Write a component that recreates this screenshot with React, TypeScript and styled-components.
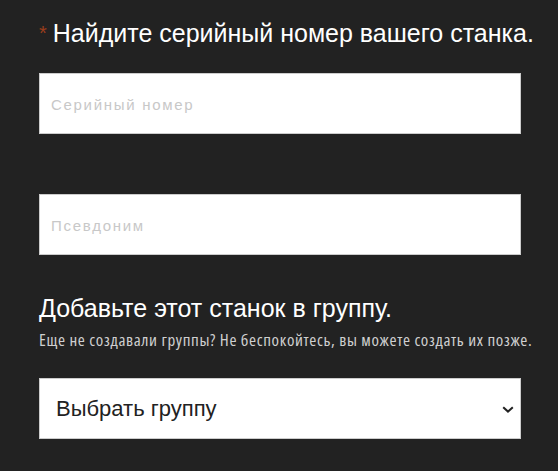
import { createGlobalStyle } from "styled-components";
import styled from "styled-components";

const GlobalStyle = createGlobalStyle`
	html, body {
		margin: 0;
		padding: 0;
		background: #222222;
	}

	body {
		font-family: "Liberation Sans", Arial, sans-serif;
	}

	* {
		box-sizing: border-box;
	}
`;

const App = () => {
	return (
		<>
			<GlobalStyle />
			<Page>
				<Title>
					<Required>*</Required>
					Найдите серийный номер вашего станка.
				</Title>
				<TextField placeholder="Серийный номер" />
				<TextField placeholder="Псевдоним" spaced />
				<SectionTitle>Добавьте этот станок в группу.</SectionTitle>
				<Hint>Еще не создавали группы? Не беспокойтесь, вы можете создать их позже.</Hint>
				<SelectWrap>
					<Select defaultValue="">
						<option value="">Выбрать группу</option>
					</Select>
					<Chevron viewBox="0 0 12 7" aria-hidden="true">
						<path d="M1.2 1.2 L6 5.6 L10.8 1.2" />
					</Chevron>
				</SelectWrap>
			</Page>
		</>
	);
};

export default App;

const Page = styled.main`
	display: flex;
	flex-direction: column;
	align-items: flex-start;
	width: 558px;
	min-height: 471px;
	padding: 19px 0 0 39px;
`;

const Title = styled.h2`
	margin: 0 0 25px 0;
	font-size: 25px;
	font-weight: 400;
	line-height: 29px;
	color: #ffffff;
	white-space: nowrap;
`;

const Required = styled.span`
	display: inline-block;
	margin-right: 6px;
	font-size: 20px;
	color: #9b3d1c;
	vertical-align: top;
	line-height: 20px;
	position: relative;
	top: 4px;
`;

const TextField = styled.input<{ spaced?: boolean }>`
	width: 482px;
	height: 61px;
	margin-top: ${(props) => (props.spaced ? "60px" : "0")};
	padding: 2px 11px 0 11px;
	border: 1px solid #cccccc;
	border-radius: 0;
	background: #ffffff;
	font-family: "Liberation Sans", Arial, sans-serif;
	font-size: 15px;
	letter-spacing: 1.7px;
	color: #333333;
	outline: none;

	&::placeholder {
		color: #c8c8c8;
	}
`;

const SectionTitle = styled.h3`
	margin: 39px 0 0 0;
	font-size: 25px;
	font-weight: 400;
	line-height: 29px;
	color: #ffffff;
	white-space: nowrap;
`;

// condensed face of Open Sans, opened up a little to reach the original width
const Hint = styled.p`
	margin: 6px 0 0 0;
	font-family: "Open Sans", sans-serif;
	font-stretch: 75%;
	font-weight: 400;
	font-size: 17px;
	letter-spacing: 0.64px;
	line-height: 22px;
	color: #cfcfcf;
	white-space: nowrap;
`;

const SelectWrap = styled.div`
	position: relative;
	margin-top: 27px;
	width: 482px;
	height: 61px;
`;

const Select = styled.select`
	appearance: none;
	width: 100%;
	height: 100%;
	padding: 0 40px 0 16px;
	border: 1px solid #cccccc;
	border-radius: 0;
	background: #ffffff;
	font-family: "Liberation Sans", Arial, sans-serif;
	font-size: 22px;
	color: #222222;
	outline: none;
`;

const Chevron = styled.svg`
	position: absolute;
	right: 7px;
	top: 28px;
	width: 12px;
	height: 7px;
	pointer-events: none;
	fill: none;
	stroke: #222222;
	stroke-width: 2;
`;
